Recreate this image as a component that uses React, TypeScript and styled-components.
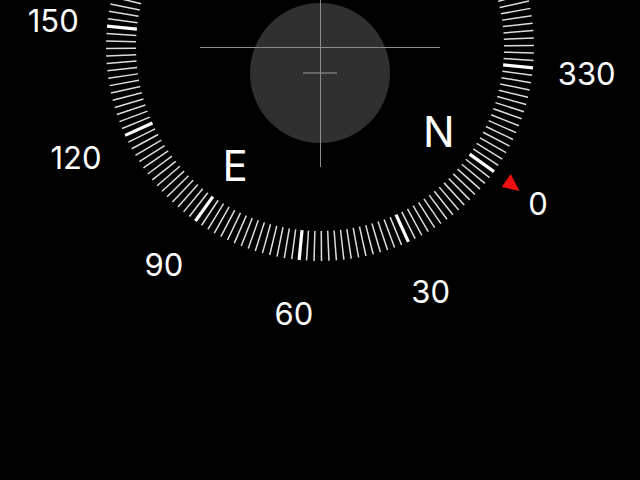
import React from 'react';
import styled, { createGlobalStyle } from 'styled-components';

const GlobalStyle = createGlobalStyle`
    html, body {
        margin: 0;
        padding: 0;
        background: #000;
    }
`;

const Screen = styled.div`
    width: 640px;
    height: 480px;
    background: #000;
    overflow: hidden;
    position: relative;
    font-family: 'Inter', 'Liberation Sans', sans-serif;
`;

const Dial = styled.svg`
    display: block;
    width: 640px;
    height: 480px;
`;

const DegreeLabel = styled.text`
    fill: #fff;
    font-family: 'Inter', 'Liberation Sans', sans-serif;
    font-size: 31px;
    font-weight: 400;
`;

const CardinalLabel = styled.text`
    fill: #fff;
    font-family: 'Inter', 'Liberation Sans', sans-serif;
    font-size: 42px;
    font-weight: 400;
`;

// dial geometry
const CX = 320;
const CY = 47;
const ROT = 125.6;
const TICK_IN = 184;
const TICK_OUT = 214;

const polar = (deg: number, r: number) => {
    const a = ((deg + ROT) * Math.PI) / 180;
    return { x: CX + r * Math.sin(a), y: CY - r * Math.cos(a) };
};

// only the labels that fall inside the screen
const degrees = [0, 30, 60, 90, 120, 150, 330];
const cardinals = [
    { label: 'N', deg: 0 },
    { label: 'E', deg: 90 },
];

const Ticks: React.FC = () => {
    const ticks = [];
    for (let d = 0; d < 360; d += 2) {
        const major = d % 30 === 0;
        const p1 = polar(d, TICK_IN);
        const p2 = polar(d, TICK_OUT);
        ticks.push(
            <line
                key={d}
                x1={p1.x}
                y1={p1.y}
                x2={p2.x}
                y2={p2.y}
                stroke={major ? '#fff' : '#dcdcdc'}
                strokeWidth={major ? 3.2 : 1.5}
            />
        );
    }
    return <g>{ticks}</g>;
};

export default function App() {
    return (
        <Screen>
            <GlobalStyle />
            <Dial viewBox="0 0 640 480">
                {/* level bubble */}
                <circle cx={320} cy={73} r={70} fill="#303030" />
                <line x1={303} y1={73} x2={337} y2={73} stroke="#9a9a9a" strokeWidth={1} />

                {/* crosshair */}
                <line x1={200} y1={47.5} x2={440} y2={47.5} stroke="#8c8c8c" strokeWidth={1} />
                <line x1={320.5} y1={-73} x2={320.5} y2={167} stroke="#8c8c8c" strokeWidth={1} />

                <Ticks />

                {degrees.map((d) => {
                    const p = polar(d, 268);
                    return (
                        <DegreeLabel key={d} x={p.x} y={p.y + 11.5} textAnchor="middle">
                            {d}
                        </DegreeLabel>
                    );
                })}

                {cardinals.map((c) => {
                    const p = polar(c.deg, 146);
                    return (
                        <CardinalLabel key={c.label} x={p.x} y={p.y + 15.5} textAnchor="middle">
                            {c.label}
                        </CardinalLabel>
                    );
                })}

                {/* north marker */}
                <polygon points="510.7,174 501.7,187 519.5,191" fill="#ee1010" />
            </Dial>
        </Screen>
    );
}
